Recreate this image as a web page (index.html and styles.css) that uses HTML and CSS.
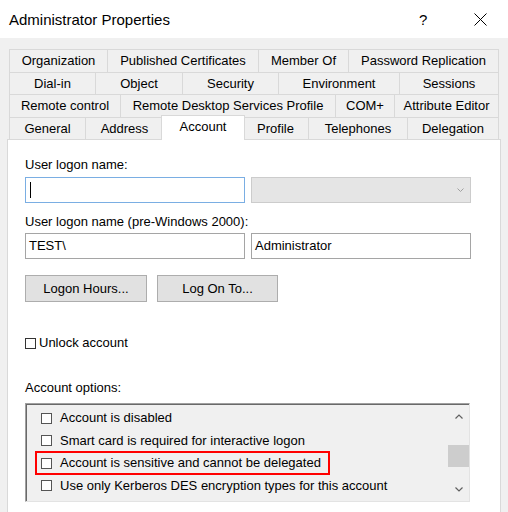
FILE: index.html
```html
<!DOCTYPE html>
<html>
<head>
<meta charset="utf-8">
<title>Administrator Properties</title>
<link rel="stylesheet" href="styles.css">
</head>
<body>
<div class="window">
  <div class="titlebar">
    <span class="title">Administrator Properties</span>
    <span class="help">?</span>
    <svg class="close" width="13" height="13" viewBox="0 0 13 13"><path d="M0.5 0.5 L12.5 12.5 M12.5 0.5 L0.5 12.5" stroke="#000" stroke-width="1" fill="none"/></svg>
  </div>
  <div class="body">
    <div class="tabs">
      <div class="tab-row r1">
        <div class="tab">Organization</div>
        <div class="tab">Published Certificates</div>
        <div class="tab">Member Of</div>
        <div class="tab">Password Replication</div>
      </div>
      <div class="tab-row r2">
        <div class="tab">Dial-in</div>
        <div class="tab">Object</div>
        <div class="tab">Security</div>
        <div class="tab">Environment</div>
        <div class="tab">Sessions</div>
      </div>
      <div class="tab-row r3">
        <div class="tab">Remote control</div>
        <div class="tab">Remote Desktop Services Profile</div>
        <div class="tab">COM+</div>
        <div class="tab">Attribute Editor</div>
      </div>
      <div class="tab-row r4">
        <div class="tab">General</div>
        <div class="tab">Address</div>
        <div class="tab active">Account</div>
        <div class="tab">Profile</div>
        <div class="tab">Telephones</div>
        <div class="tab">Delegation</div>
      </div>
    </div>
    <div class="panel">
      <div class="label">User logon name:</div>
      <div class="field-row">
        <div class="input focus"><span class="caret"></span></div>
        <div class="combo">
          <svg width="7" height="4" viewBox="0 0 7 4"><path d="M0.5 0.5 L3.5 3.5 L6.5 0.5" stroke="#a0a0a0" stroke-width="1" fill="none"/></svg>
        </div>
      </div>
      <div class="label second">User logon name (pre-Windows 2000):</div>
      <div class="field-row tight">
        <div class="input">TEST\</div>
        <div class="input">Administrator</div>
      </div>
      <div class="buttons">
        <button class="btn">Logon Hours...</button>
        <button class="btn narrow">Log On To...</button>
      </div>
      <div class="check-row">
        <span class="checkbox"></span>
        <span>Unlock account</span>
      </div>
      <div class="label options">Account options:</div>
      <div class="listbox">
        <div class="list">
          <div class="item"><span class="checkbox gray"></span><span>Account is disabled</span></div>
          <div class="item"><span class="checkbox gray"></span><span>Smart card is required for interactive logon</span></div>
          <div class="item"><span class="mark"><span class="checkbox gray"></span><span>Account is sensitive and cannot be delegated</span></span></div>
          <div class="item"><span class="checkbox gray"></span><span>Use only Kerberos DES encryption types for this account</span></div>
        </div>
        <div class="scrollbar">
          <div class="sb-btn">
            <svg width="8" height="5" viewBox="0 0 8 5"><path d="M0.5 4.5 L4 1 L7.5 4.5" stroke="#606060" stroke-width="1.2" fill="none"/></svg>
          </div>
          <div class="thumb"></div>
          <div class="sb-btn down">
            <svg width="8" height="5" viewBox="0 0 8 5"><path d="M0.5 0.5 L4 4 L7.5 0.5" stroke="#606060" stroke-width="1.2" fill="none"/></svg>
          </div>
        </div>
      </div>
    </div>
  </div>
</div>
</body>
</html>
```
FILE: styles.css
```css
html, body {
  margin: 0;
  padding: 0;
}
body {
  font-family: "Liberation Sans", Arial, sans-serif;
  font-size: 13px;
  color: #000;
  background: #f0f0f0;
  width: 508px;
  height: 512px;
  overflow: hidden;
}
.titlebar {
  height: 38px;
  background: #fff;
  display: flex;
  align-items: center;
  padding-left: 9px;
}
.title {
  font-size: 15px;
  line-height: 17px;
}
.help {
  margin-left: auto;
  width: 9px;
  margin-right: 46px;
  font-size: 15px;
  line-height: 17px;
}
.close {
  display: block;
  margin-right: 21px;
}
.body {
  padding: 11px 7px 0;
}
.tabs {
  background: #d9d9d9;
  margin: 0 2px;
  padding: 1px 1px 0;
  display: flex;
  flex-direction: column;
  gap: 1px;
}
.tab-row {
  display: grid;
  gap: 1px;
}
.r1 { grid-template-columns: 97px 150px 89px 149px; height: 22px; }
.r2 { grid-template-columns: 85px 86px 95px 120px 98px; height: 21px; }
.r3 { grid-template-columns: 110px 214px 58px 103px; height: 22px; }
.r4 { grid-template-columns: 75px 77px 78px 65px 98px 90px; height: 21px; }
.tab {
  background: #f0f0f0;
  display: flex;
  align-items: center;
  justify-content: center;
  white-space: nowrap;
  line-height: 16px;
}
.tab.active {
  background: #fff;
  margin: -3px -3px -1px;
  border: 1px solid #d9d9d9;
  border-bottom: 0;
  padding-bottom: 3px;
  z-index: 1;
}
.panel {
  background: #fff;
  border: 1px solid #d9d9d9;
  border-bottom: 0;
  box-sizing: border-box;
  height: 373px;
  padding: 17px 0 0 17px;
}
.label {
  line-height: 16px;
}
.label.second {
  margin-top: 11px;
}
.label.options {
  margin-top: 29px;
}
.field-row {
  display: flex;
  gap: 6px;
  margin-top: 4px;
}
.field-row.tight {
  margin-top: 3px;
}
.input {
  width: 220px;
  height: 26px;
  box-sizing: border-box;
  border: 1px solid #a5a5a5;
  background: #fff;
  display: flex;
  align-items: center;
  padding-left: 3px;
  line-height: 16px;
}
.input.focus {
  border-color: #7aaee3;
}
.caret {
  width: 1px;
  height: 16px;
  background: #000;
  margin-left: 1px;
}
.combo {
  width: 220px;
  height: 26px;
  box-sizing: border-box;
  border: 1px solid #cccccc;
  background: #e5e5e5;
  display: flex;
  align-items: center;
  justify-content: flex-end;
  padding-right: 6px;
}
.combo svg {
  display: block;
}
.buttons {
  display: flex;
  gap: 10px;
  margin-top: 16px;
}
.btn {
  width: 122px;
  height: 27px;
  box-sizing: border-box;
  border: 1px solid #adadad;
  background: #e1e1e1;
  font: inherit;
  color: #000;
  padding: 0;
  margin: 0;
}
.btn.narrow {
  width: 121px;
}
.check-row {
  display: flex;
  align-items: center;
  gap: 3px;
  margin-top: 33px;
  line-height: 16px;
}
.checkbox {
  display: block;
  width: 11px;
  height: 11px;
  box-sizing: border-box;
  border: 1px solid #333;
  background: #fff;
  flex: none;
}
.checkbox.gray {
  border-color: #555;
}
.listbox {
  margin-top: 7px;
  width: 445px;
  height: 99px;
  box-sizing: border-box;
  border-style: solid;
  border-width: 1px;
  border-color: #a0a0a0 #e3e3e3 #e3e3e3 #a0a0a0;
  box-shadow: inset 1px 1px 0 #696969;
  background: #f0f0f0;
  display: flex;
}
.list {
  flex: 1;
  padding: 3px 0 0 15px;
}
.item {
  height: 22.5px;
  display: flex;
  align-items: center;
  gap: 8px;
  line-height: 16px;
  white-space: nowrap;
}
.mark {
  display: flex;
  align-items: center;
  gap: 8px;
  height: 24px;
  box-sizing: border-box;
  border: 2px solid #ff0000;
  padding: 0 7px 0 4px;
  margin-left: -6px;
  flex: none;
}
.scrollbar {
  width: 21px;
  display: flex;
  flex-direction: column;
  align-items: center;
  background: #f0f0f0;
  margin-top: 1px;
}
.sb-btn {
  height: 23px;
  width: 100%;
  display: flex;
  align-items: center;
  justify-content: center;
}
.sb-btn svg {
  display: block;
}
.sb-btn.down {
  margin-top: auto;
}
.thumb {
  margin-top: 17px;
  width: 100%;
  height: 22px;
  background: #cdcdcd;
}
```
